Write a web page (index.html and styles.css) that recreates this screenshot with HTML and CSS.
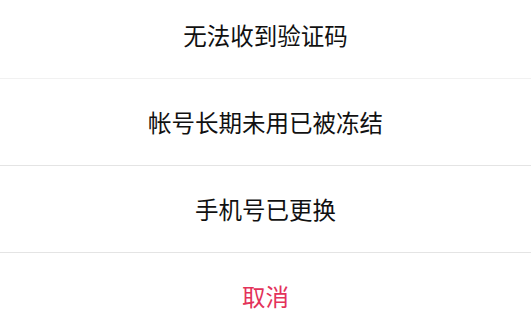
FILE: index.html
```html
<!DOCTYPE html>
<html lang="zh-CN">
<head>
<meta charset="utf-8">
<link rel="stylesheet" href="styles.css">
</head>
<body>
<div class="sheet">
  <div class="item item-first">无法收到验证码</div>
  <div class="item">帐号长期未用已被冻结</div>
  <div class="item">手机号已更换</div>
  <div class="item item-cancel">取消</div>
</div>
</body>
</html>
```

FILE: styles.css
```css
html, body {
  margin: 0;
  padding: 0;
  background: #ffffff;
}
body {
  font-family: "Noto Sans CJK SC", "Noto Sans", sans-serif;
  height: 319px;
  overflow: hidden;
}
.sheet {
  margin-top: -8px;
  display: flex;
  flex-direction: column;
}
.item {
  height: 86px;
  flex: none;
  display: flex;
  align-items: center;
  justify-content: center;
  font-size: 23.5px;
  color: #111111;
  border-bottom: 1px solid #e4e4e4;
}
.item-first {
  border-bottom-color: #f1f1f1;
}
.item-cancel {
  color: #e3325a;
  border-bottom: none;
}
```
